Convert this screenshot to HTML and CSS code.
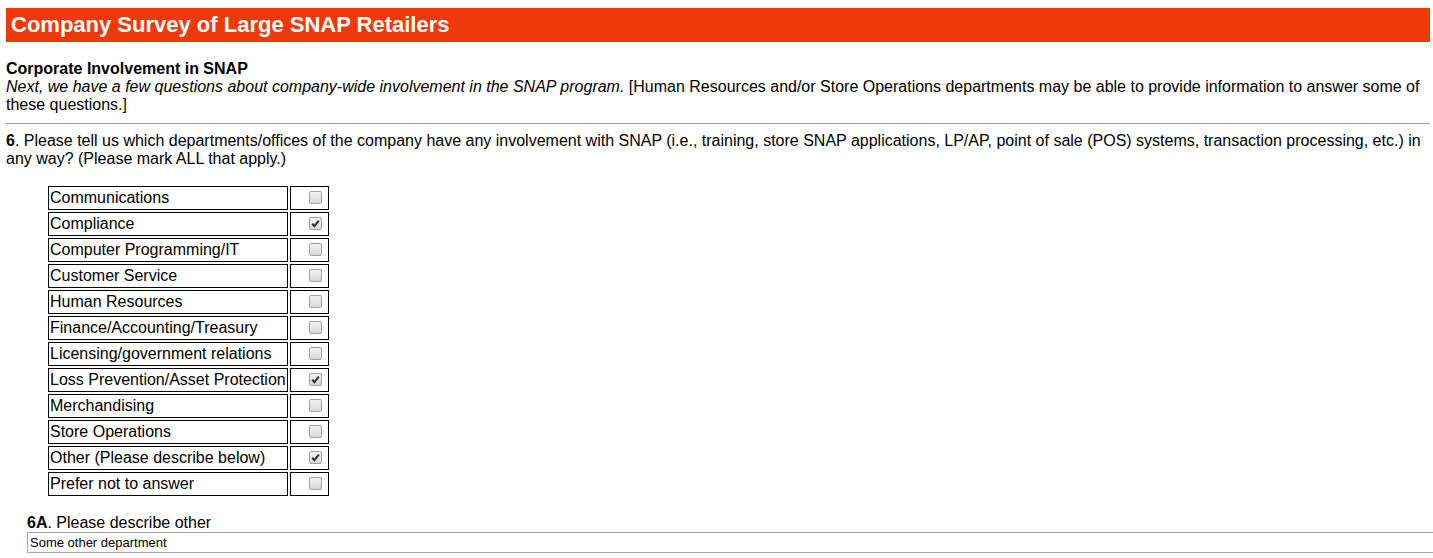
FILE: index.html
```html
<!DOCTYPE html>
<html>
<head>
<meta charset="utf-8">
<title>Company Survey of Large SNAP Retailers</title>
<link rel="stylesheet" href="styles.css">
</head>
<body>
<div class="page">
  <h1 class="title-bar">Company Survey of Large SNAP Retailers</h1>

  <div class="section-intro">
    <div class="section-title">Corporate Involvement in SNAP</div>
    <div class="section-text"><em>Next, we have a few questions about company-wide involvement in the SNAP program.</em> [Human Resources and/or Store Operations departments may be able to provide information to answer some of these questions.]</div>
  </div>

  <hr class="divider">

  <div class="question"><b>6</b>. Please tell us which departments/offices of the company have any involvement with SNAP (i.e., training, store SNAP applications, LP/AP, point of sale (POS) systems, transaction processing, etc.) in any way? (Please mark ALL that apply.)</div>

  <table class="options">
    <tr><td class="opt-label">Communications</td><td class="opt-box"><span class="cb"></span></td></tr>
    <tr><td class="opt-label">Compliance</td><td class="opt-box"><span class="cb checked"><svg viewBox="0 0 13 13" width="13" height="13"><path d="M3.2 6.8 L5.4 9.2 L9.8 3.6" fill="none" stroke="#2e2e2e" stroke-width="2"/></svg></span></td></tr>
    <tr><td class="opt-label">Computer Programming/IT</td><td class="opt-box"><span class="cb"></span></td></tr>
    <tr><td class="opt-label">Customer Service</td><td class="opt-box"><span class="cb"></span></td></tr>
    <tr><td class="opt-label">Human Resources</td><td class="opt-box"><span class="cb"></span></td></tr>
    <tr><td class="opt-label">Finance/Accounting/Treasury</td><td class="opt-box"><span class="cb"></span></td></tr>
    <tr><td class="opt-label">Licensing/government relations</td><td class="opt-box"><span class="cb"></span></td></tr>
    <tr><td class="opt-label">Loss Prevention/Asset Protection</td><td class="opt-box"><span class="cb checked"><svg viewBox="0 0 13 13" width="13" height="13"><path d="M3.2 6.8 L5.4 9.2 L9.8 3.6" fill="none" stroke="#2e2e2e" stroke-width="2"/></svg></span></td></tr>
    <tr><td class="opt-label">Merchandising</td><td class="opt-box"><span class="cb"></span></td></tr>
    <tr><td class="opt-label">Store Operations</td><td class="opt-box"><span class="cb"></span></td></tr>
    <tr><td class="opt-label">Other (Please describe below)</td><td class="opt-box"><span class="cb checked"><svg viewBox="0 0 13 13" width="13" height="13"><path d="M3.2 6.8 L5.4 9.2 L9.8 3.6" fill="none" stroke="#2e2e2e" stroke-width="2"/></svg></span></td></tr>
    <tr><td class="opt-label">Prefer not to answer</td><td class="opt-box"><span class="cb"></span></td></tr>
  </table>

  <div class="subquestion">
    <div class="sub-label"><b>6A</b>. Please describe other</div>
    <input class="text-input" type="text" value="Some other department">
  </div>
</div>
</body>
</html>
```

FILE: styles.css
```css
html, body {
  margin: 0;
  padding: 0;
  background: #ffffff;
}

body {
  font-family: "Liberation Sans", Arial, sans-serif;
  font-size: 16px;
  color: #000000;
  padding: 8px 3px 0 6px;
  overflow: hidden;
}

.title-bar {
  margin: 0;
  background: #f0390b;
  color: #ffffff;
  font-size: 22px;
  font-weight: bold;
  line-height: 25px;
  padding: 4px 5px 5px 5px;
}

.section-intro {
  margin-top: 18px;
  line-height: 18px;
}

.section-title {
  font-weight: bold;
}

.divider {
  margin: 9px 0 8px 0;
  border: 0;
  border-top: 1px solid #a0a0a0;
  height: 0;
}

.question {
  line-height: 18px;
}

.options {
  margin: 16px 0 0 40px;
  border-collapse: separate;
  border-spacing: 2px;
}

.options td {
  border: 1px solid #000000;
  height: 22px;
  padding: 0;
  line-height: 18px;
  vertical-align: middle;
}

.opt-label {
  width: 237px;
  padding: 0 0 0 1px !important;
  white-space: nowrap;
}

.opt-box {
  width: 37px;
  text-align: right;
}

.cb {
  display: inline-block;
  box-sizing: border-box;
  width: 13px;
  height: 13px;
  margin: 0 6px 3px 0;
  border: 1px solid #a0a0a0;
  border-radius: 2px;
  background: linear-gradient(#f2f2f2, #d8d8d8);
  vertical-align: middle;
  position: relative;
}

.cb svg {
  position: absolute;
  left: -1px;
  top: -1px;
}

.subquestion {
  margin: 16px 0 0 21px;
}

.sub-label {
  line-height: 18px;
}

.text-input {
  display: block;
  box-sizing: border-box;
  width: calc(100% + 4px);
  height: 21px;
  margin: 0;
  padding: 0 2px;
  border: 1px solid #a9a9a9;
  font-family: "Liberation Sans", Arial, sans-serif;
  font-size: 13px;
  color: #000000;
  background: #ffffff;
  outline: none;
}
```
